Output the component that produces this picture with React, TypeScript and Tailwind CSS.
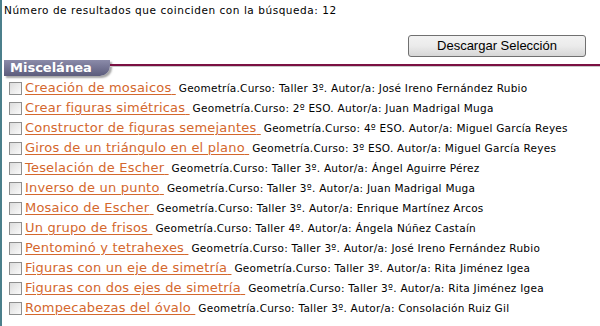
const rows = [
  { title: 'Creación de mosaicos', info: 'Geometría.Curso: Taller 3º. Autor/a: José Ireno Fernández Rubio' },
  { title: 'Crear figuras simétricas', info: 'Geometría.Curso: 2º ESO. Autor/a: Juan Madrigal Muga' },
  { title: 'Constructor de figuras semejantes', info: 'Geometría.Curso: 4º ESO. Autor/a: Miguel García Reyes' },
  { title: 'Giros de un triángulo en el plano', info: 'Geometría.Curso: 3º ESO. Autor/a: Miguel García Reyes' },
  { title: 'Teselación de Escher', info: 'Geometría.Curso: Taller 3º. Autor/a: Ángel Aguirre Pérez' },
  { title: 'Inverso de un punto', info: 'Geometría.Curso: Taller 3º. Autor/a: Juan Madrigal Muga' },
  { title: 'Mosaico de Escher', info: 'Geometría.Curso: Taller 3º. Autor/a: Enrique Martínez Arcos' },
  { title: 'Un grupo de frisos', info: 'Geometría.Curso: Taller 4º. Autor/a: Ángela Núñez Castaín' },
  { title: 'Pentominó y tetrahexes', info: 'Geometría.Curso: Taller 3º. Autor/a: José Ireno Fernández Rubio' },
  { title: 'Figuras con un eje de simetría', info: 'Geometría.Curso: Taller 3º. Autor/a: Rita Jiménez Igea' },
  { title: 'Figuras con dos ejes de simetría', info: 'Geometría.Curso: Taller 3º. Autor/a: Rita Jiménez Igea' },
  { title: 'Rompecabezas del óvalo', info: 'Geometría.Curso: Taller 3º. Autor/a: Consolación Ruiz Gil' },
];

export default function App() {
  return (
    <div className="min-h-[326px] border-l-2 border-[#4b7f8b] bg-white font-['DejaVu_Sans',sans-serif] text-black">
      {/* Result count */}
      <p className="pl-[2px] pt-[4px] text-[10.5px] leading-[12px] tracking-[0.55px]">
        Número de resultados que coinciden con la búsqueda: 12
      </p>

      {/* Download button */}
      <div className="mt-[19px] flex justify-end pr-[14px]">
        <button className="h-[22px] w-[178px] rounded-[3px] border border-[#707070] bg-gradient-to-b from-[#f2f2f2] via-[#ebebeb] to-[#d6d6d6] font-['Liberation_Sans',sans-serif] text-[13px] leading-[20px] text-black">
          Descargar Selección
        </button>
      </div>

      {/* Section header */}
      <div className="mt-[3px] flex items-start">
        <div className="ml-[2px] flex h-[16px] w-[106px] items-center rounded-br-[10px] bg-gradient-to-b from-[#8b8ba9] to-[#5c5c7c] pl-[6px] text-[13px] font-bold leading-[16px] text-white shadow-[2px_2px_2px_rgba(0,0,0,0.35)]">
          Miscelánea
        </div>
        <div className="mt-[4px] flex-1 border-b border-[#c8c8c8]">
          <div className="h-[2px] bg-[#7b1042]" />
        </div>
      </div>

      {/* Results */}
      <ul className="mt-[2px] pl-[7px]">
        {rows.map((r) => (
          <li key={r.title} className="flex h-[20px] items-center">
            <span className="mr-[3px] h-[13px] w-[13px] shrink-0 border border-[#8e8f8f] bg-gradient-to-br from-[#dcdcdc] to-[#fbfbfb]" />
            <a className="text-[13px] leading-[16px] tracking-[0.2px] text-[#d4672d] underline decoration-[#d4672d] underline-offset-2">
              {r.title}&nbsp;
            </a>
            <span className="ml-[3px] whitespace-nowrap text-[10.5px] leading-[12px] tracking-[0.25px]">{r.info}</span>
          </li>
        ))}
      </ul>
    </div>
  );
}
